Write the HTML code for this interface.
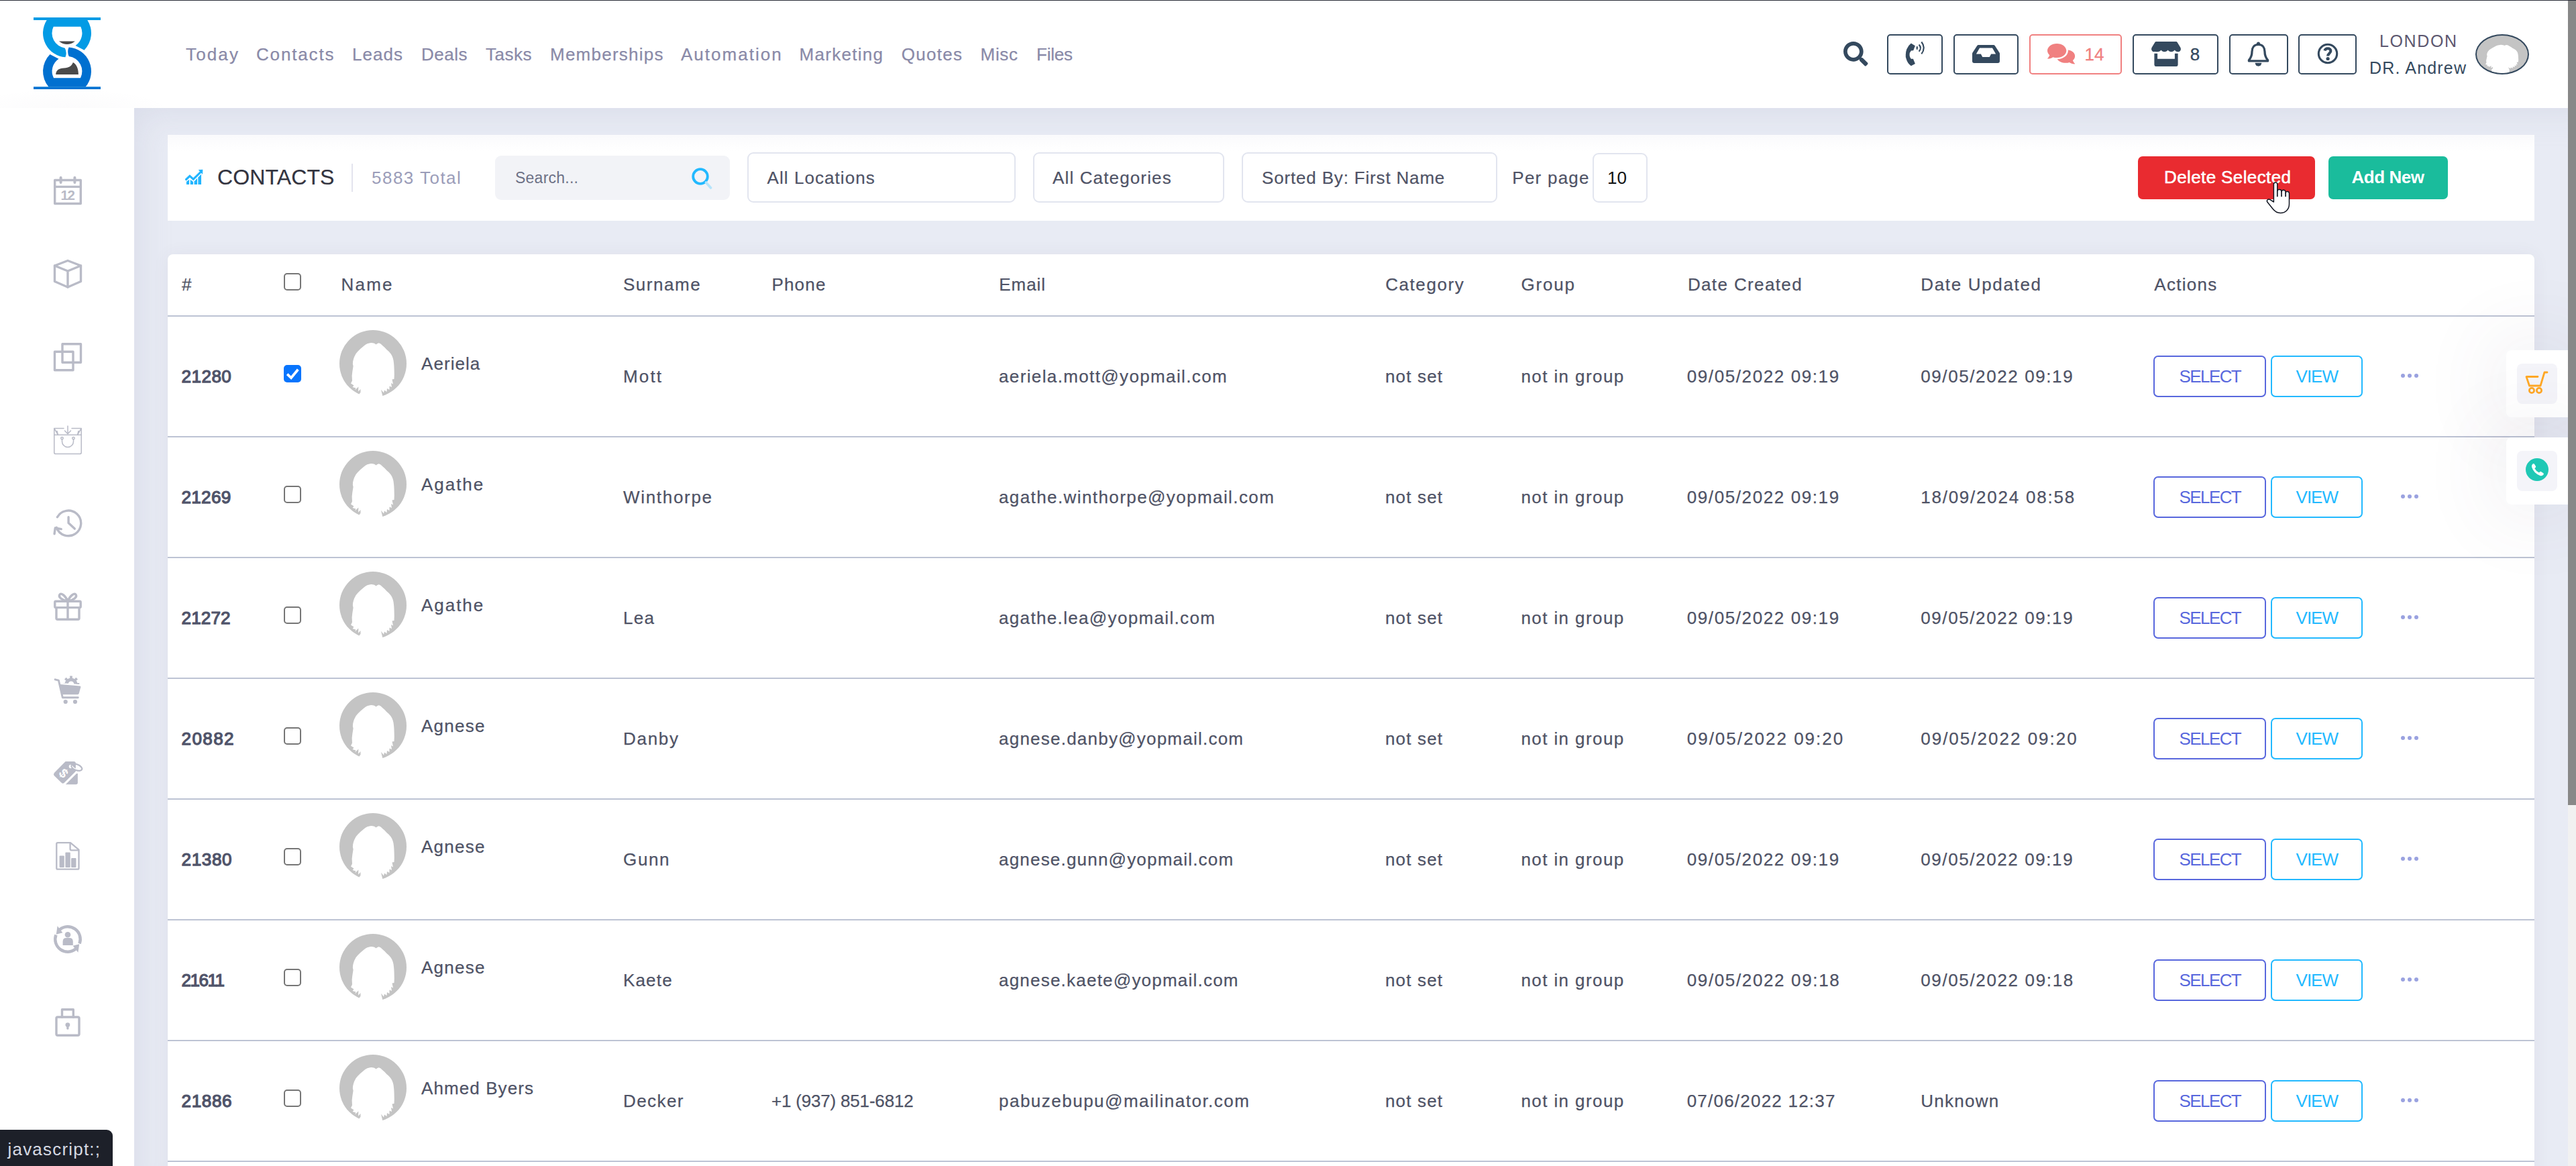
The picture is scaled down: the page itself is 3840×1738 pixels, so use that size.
<!DOCTYPE html>
<html lang="en"><head><meta charset="utf-8"><title>Contacts</title>
<style>

*{box-sizing:border-box;margin:0;padding:0}
html,body{width:3840px;height:1738px;overflow:hidden;background:#fff}
body{position:relative;font-family:"Liberation Sans",Arial,sans-serif;font-size:25px;color:#4f5366}
svg{display:block}
.topline{position:absolute;left:0;top:0;width:3840px;height:1px;background:#2a2d38;z-index:50}
.hdr{position:absolute;left:0;top:0;width:3828px;height:161px;background:#fff;z-index:20}
.hdr-shadow{position:absolute;left:0;top:121px;width:320px;height:40px;background:radial-gradient(ellipse 160px 34px at 100px 44px,rgba(82,63,105,.022),rgba(82,63,105,0) 100%)}
.logo{position:absolute;left:50px;top:26px;width:100px;height:108px}
.side{position:absolute;left:0;top:161px;width:200px;height:1577px;background:#fff;z-index:10}
.sico{position:absolute;left:77px;width:48px;height:48px;color:#b9bbc7}
.sico svg{width:48px;height:48px}
.content{position:absolute;left:200px;top:161px;width:3628px;height:1577px;background:#e8ebf4;overflow:hidden}
.content-shade{position:absolute;left:0;top:0;right:0;bottom:0;box-shadow:inset 30px 30px 50px -24px rgba(170,176,200,.24)}
.toolbar{position:absolute;left:50px;top:40px;width:3528px;height:128px;background:linear-gradient(#fafafc,#fff 24px)}
.tcard{position:absolute;left:50px;top:218px;width:3528px;height:1400px;background:#fff;border-radius:8px 8px 0 0;box-shadow:0 0 26px 0 rgba(82,63,105,.06)}
.thead{position:absolute;left:0;top:0;width:100%;height:91px}
.row{position:absolute;left:0;width:100%;height:180px;border-top:2px solid #bdc3d4}
.t{position:absolute;white-space:nowrap;line-height:1;transform:translateY(-50%)}
.nav{font-size:26px;color:#8a8aa8;-webkit-text-stroke:.25px #8a8aa8}
.th{font-size:26px;color:#4f5366;-webkit-text-stroke:.25px #4f5366}
.td{font-size:26px;color:#4f5366;-webkit-text-stroke:.25px #4f5366}
.idc{font-size:26px;font-weight:400;color:#50546a;-webkit-text-stroke:1.25px #50546a}
.ttl{font-size:32px;color:#33343f;-webkit-text-stroke:.2px #33343f}
.desc{font-size:26px;color:#9b9db9}
.ph{font-size:23px;color:#6d7186}
.so{font-size:26px;color:#4f5366;-webkit-text-stroke:.2px #4f5366}
.pp{font-size:26px;color:#4f5366;-webkit-text-stroke:.2px #4f5366}
.ten{font-size:26px;color:#111}
.bw{font-size:26px;font-weight:400;color:#fff;-webkit-text-stroke:.55px #fff}
.bb{font-size:26px;font-weight:700;color:#fff}
.cnt{font-size:26px;-webkit-text-stroke:.3px currentColor}
.salmon{color:#f08080}
.navy{color:#34495e}
.loc{font-size:25px;color:#5d5870}
.usr{font-size:25px;color:#34495e}
.bsel{font-size:26px;color:#5867dd}
.bvw{font-size:26px;color:#22b9ff}
.hb{position:absolute;border:2px solid #34495e;border-radius:5px;color:#34495e}
.hb.sal{border-color:#f08080;color:#f08080}
.hb svg,.hs svg{position:absolute}
.hs{position:absolute;color:#34495e}
.uav{position:absolute;border:2px solid #34495e;border-radius:50%;overflow:hidden;background:#c4c4c4}
.chart{position:absolute;color:#22b5ff}
.vdiv{position:absolute;background:#e3e4ee}
.sbox{position:absolute;background:#f2f3f7;border-radius:9px}
.sbox svg{position:absolute;left:293px;top:18px}
.selbox{position:absolute;border:2px solid #e2e5ef;border-radius:9px;background:#fff}
.bdel{position:absolute;background:#e92b30;border-radius:7px}
.badd{position:absolute;background:#1abc9c;border-radius:7px}
.av{position:absolute;left:256px;top:20px;width:100px;height:100px}
.cb{position:absolute;left:173px;top:72px;width:26px;height:26px;border:2px solid #767676;border-radius:5px;background:#fff}
.thead .cb{top:28px}
.cb.on{background:#0875fd;border:0}
.cb svg{position:absolute;left:0;top:0}
.btn{position:absolute;border:2px solid #5867dd;border-radius:7px}
.btn.vw{border-color:#22b9ff}
.dots{position:absolute;left:3329px;top:85px;width:28px;height:8px}
.dots i{position:absolute;top:0;width:6.4px;height:6.4px;border-radius:50%;background:#9aa2e0}
.dots i:nth-child(1){left:0}.dots i:nth-child(2){left:10px}.dots i:nth-child(3){left:20px}
.fl{position:absolute;left:3736px;width:92px;height:100px;background:#fff;border-radius:8px 0 0 8px;z-index:30;box-shadow:0 0 110px 30px rgba(82,63,105,.06)}
.fli{position:absolute;left:16px;top:20px;width:60px;height:60px;border-radius:8px;background:#f4f4f9}
.fli svg{position:absolute;left:0;top:0}
.sbar{position:absolute;left:3828px;top:0;width:12px;height:1738px;background:#f1f1f1;z-index:40}
.thumb{position:absolute;left:0;top:0;width:12px;height:1200px;background:#888}
.status{position:absolute;left:0;top:1684px;height:54px;width:168px;background:#1d2029;border-top-right-radius:9px;z-index:60}
.stt{font-size:26px;color:#d6d9e2}
.cursor{position:absolute;left:3376px;top:268px;z-index:70}

</style></head>
<body>
<main class="content"><div class="content-shade"></div>
<section class="toolbar">
<div class="chart" style="left:26px;top:51px;width:27px;height:24px;"><svg width="27" height="24" viewBox="0 -1 27 24" ><path d="M1.500 14.500L6.900 9.400L12.200 14.100L23.500 3.200" fill="none" stroke="currentColor" stroke-width="3.100" stroke-linecap="round" stroke-linejoin="miter"/><g fill="currentColor"><path d="M19.700 .100L26.300 -.200L26 7Z"/><path d="M1.900 17.700L6 14.700V22H1.900Z"/><path d="M7.700 14.800L12 17.900V22H7.700Z"/><path d="M13.500 17.500L18 12.800V22H13.500Z"/><path d="M19.300 11.500L24 6.800V22H19.300Z"/></g></svg></div>
<div class="vdiv" style="left:274px;top:43px;width:2px;height:42px;"></div>
<div class="sbox" style="left:488px;top:31px;width:350px;height:66px;"><svg width="31" height="32" viewBox="0 0 31 32" ><circle cx="13" cy="13" r="10.800" fill="none" stroke="#22b9ff" stroke-width="3.800"/><path d="M21.500 22L28.500 30" stroke="#b5e4fb" stroke-width="3.600" stroke-linecap="round"/></svg><span id="ph" class="t ph" style="left:30px;top:33px;letter-spacing:0.24px;">Search...</span></div>
<div class="selbox" style="left:864px;top:26px;width:400px;height:75px;"><span id="so0" class="t so" style="left:27.5px;top:36px;letter-spacing:1.07px;">All Locations</span></div>
<div class="selbox" style="left:1290px;top:26px;width:285px;height:75px;"><span id="so1" class="t so" style="left:27px;top:36px;letter-spacing:1.14px;">All Categories</span></div>
<div class="selbox" style="left:1601px;top:26px;width:381px;height:75px;"><span id="so2" class="t so" style="left:28px;top:36px;letter-spacing:0.83px;">Sorted By: First Name</span></div>
<div class="selbox" style="left:2124px;top:27px;width:82px;height:74px;"><span id="ten" class="t ten" style="left:20px;top:35px;">10</span></div>
<a class="bdel" style="left:2937px;top:32px;width:264px;height:64px;"><span id="bdel" class="t bw" style="left:39px;top:31px;letter-spacing:0.39px;">Delete Selected</span></a>
<a class="badd" style="left:3221px;top:32px;width:178px;height:64px;"><span id="badd" class="t bb" style="left:34.5px;top:31px;letter-spacing:-0.44px;">Add New</span></a>
<span id="ttl" class="t ttl" style="left:74px;top:63px;letter-spacing:0.12px;">CONTACTS</span>
<span id="desc" class="t desc" style="left:304px;top:64px;letter-spacing:1.48px;">5883 Total</span>
<span id="pp" class="t pp" style="left:2004.3px;top:64px;letter-spacing:1.24px;">Per page</span>
</section>
<section class="tcard">
<div class="thead">
<div class="cb" style="left:173px;top:28px;"></div>
<span id="h0" class="t th" style="left:21px;top:45px;">#</span>
<span id="h1" class="t th" style="left:258.5px;top:45px;letter-spacing:2.21px;">Name</span>
<span id="h2" class="t th" style="left:679px;top:45px;letter-spacing:1.52px;">Surname</span>
<span id="h3" class="t th" style="left:900.4px;top:45px;letter-spacing:1.20px;">Phone</span>
<span id="h4" class="t th" style="left:1239.3px;top:45px;letter-spacing:0.92px;">Email</span>
<span id="h5" class="t th" style="left:1815.2px;top:45px;letter-spacing:1.57px;">Category</span>
<span id="h6" class="t th" style="left:2017.4px;top:45px;letter-spacing:1.83px;">Group</span>
<span id="h7" class="t th" style="left:2265.9px;top:45px;letter-spacing:1.37px;">Date Created</span>
<span id="h8" class="t th" style="left:2613.2px;top:45px;letter-spacing:1.67px;">Date Updated</span>
<span id="h9" class="t th" style="left:2961.3px;top:45px;letter-spacing:1.29px;">Actions</span>
</div>
<div class="row" style="top:91px">
<div class="av"><svg width="100" height="100" viewBox="0 0 100 100"><circle cx="50" cy="50" r="50" fill="#c4c4c4"/><path fill="#fff" d="M54.6 21.6L52 19.8Q48 18.6 45.6 19.3Q41 20 38.4 21.9L31.2 28.1Q27 32 24.5 35.3Q21.8 40 20.9 43.5Q19.8 47 19.9 50.7L20.6 53.8L19.3 62.1L18.6 68.2L19 75.4L17 79.5L21.5 82.5L19.5 85L24.5 86.5L23 89.5L28.4 84.5L28 91.5L31.5 88L31.5 93L34.3 89.3L29 96L31 112H63L64.3 98L62 88.8L66 93.5L67 89.5L70.5 92L71 87L74.5 89L74.5 83.5L78 85L77 79L80 80.5L78.5 73.5L81.5 73L81.8 66.2L81.6 57.9Q81.5 53 81.1 49.7Q80.8 45 79.6 41.5Q78.5 38 76.5 35.3Q73.500 31.500 70.300 29.100Q67 25 64.100 22.900Q61.500 20 58.800 19.300Q56.5 19.6 54.6 21.6Z"/></svg></div>
<span class="cb on"><svg width="26" height="26" viewBox="0 0 26 26" ><path d="M5.200 13.700L11 19.300L21.300 6.700" fill="none" stroke="#fff" stroke-width="3.800"/></svg></span>
<span class="dots"><i></i><i></i><i></i></span>
<a class="btn sel" style="left:2960px;top:58px;width:168px;height:62px;"><span id="r0bs" class="t bsel" style="left:36.6px;top:28.5px;letter-spacing:-1.61px;">SELECT</span></a>
<a class="btn vw" style="left:3135px;top:58px;width:137px;height:62px;"><span id="r0bv" class="t bvw" style="left:35.6px;top:28.5px;letter-spacing:-1.02px;">VIEW</span></a>
<span id="r0id" class="t idc" style="left:20.5px;top:89px;letter-spacing:0.50px;">21280</span>
<span id="r0nm" class="t td" style="left:378px;top:69.5px;letter-spacing:1.06px;">Aeriela</span>
<span id="r0sn" class="t td" style="left:679px;top:89px;letter-spacing:2.14px;">Mott</span>
<span id="r0em" class="t td" style="left:1239px;top:89px;letter-spacing:1.37px;">aeriela.mott@yopmail.com</span>
<span id="r0ct" class="t td" style="left:1815px;top:89px;letter-spacing:1.16px;">not set</span>
<span id="r0gr" class="t td" style="left:2017.4px;top:89px;letter-spacing:1.41px;">not in group</span>
<span id="r0dc" class="t td" style="left:2264.7px;top:89px;letter-spacing:1.60px;">09/05/2022 09:19</span>
<span id="r0du" class="t td" style="left:2613.2px;top:89px;letter-spacing:1.60px;">09/05/2022 09:19</span>
</div>
<div class="row" style="top:271px">
<div class="av"><svg width="100" height="100" viewBox="0 0 100 100"><circle cx="50" cy="50" r="50" fill="#c4c4c4"/><path fill="#fff" d="M54.6 21.6L52 19.8Q48 18.6 45.6 19.3Q41 20 38.4 21.9L31.2 28.1Q27 32 24.5 35.3Q21.8 40 20.9 43.5Q19.8 47 19.9 50.7L20.6 53.8L19.3 62.1L18.6 68.2L19 75.4L17 79.5L21.5 82.5L19.5 85L24.5 86.5L23 89.5L28.4 84.5L28 91.5L31.5 88L31.5 93L34.3 89.3L29 96L31 112H63L64.3 98L62 88.8L66 93.5L67 89.5L70.5 92L71 87L74.5 89L74.5 83.5L78 85L77 79L80 80.5L78.5 73.5L81.5 73L81.8 66.2L81.6 57.9Q81.5 53 81.1 49.7Q80.8 45 79.6 41.5Q78.5 38 76.5 35.3Q73.500 31.500 70.300 29.100Q67 25 64.100 22.900Q61.500 20 58.800 19.300Q56.5 19.6 54.6 21.6Z"/></svg></div>
<span class="cb"></span>
<span class="dots"><i></i><i></i><i></i></span>
<a class="btn sel" style="left:2960px;top:58px;width:168px;height:62px;"><span id="r1bs" class="t bsel" style="left:36.6px;top:28.5px;letter-spacing:-1.61px;">SELECT</span></a>
<a class="btn vw" style="left:3135px;top:58px;width:137px;height:62px;"><span id="r1bv" class="t bvw" style="left:35.6px;top:28.5px;letter-spacing:-1.02px;">VIEW</span></a>
<span id="r1id" class="t idc" style="left:20.5px;top:89px;letter-spacing:0.35px;">21269</span>
<span id="r1nm" class="t td" style="left:378px;top:69.5px;letter-spacing:1.96px;">Agathe</span>
<span id="r1sn" class="t td" style="left:679px;top:89px;letter-spacing:1.69px;">Winthorpe</span>
<span id="r1em" class="t td" style="left:1239px;top:89px;letter-spacing:1.41px;">agathe.winthorpe@yopmail.com</span>
<span id="r1ct" class="t td" style="left:1815px;top:89px;letter-spacing:1.16px;">not set</span>
<span id="r1gr" class="t td" style="left:2017.4px;top:89px;letter-spacing:1.41px;">not in group</span>
<span id="r1dc" class="t td" style="left:2264.7px;top:89px;letter-spacing:1.60px;">09/05/2022 09:19</span>
<span id="r1du" class="t td" style="left:2613.2px;top:89px;letter-spacing:1.77px;">18/09/2024 08:58</span>
</div>
<div class="row" style="top:451px">
<div class="av"><svg width="100" height="100" viewBox="0 0 100 100"><circle cx="50" cy="50" r="50" fill="#c4c4c4"/><path fill="#fff" d="M54.6 21.6L52 19.8Q48 18.6 45.6 19.3Q41 20 38.4 21.9L31.2 28.1Q27 32 24.5 35.3Q21.8 40 20.9 43.5Q19.8 47 19.9 50.7L20.6 53.8L19.3 62.1L18.6 68.2L19 75.4L17 79.5L21.5 82.5L19.5 85L24.5 86.5L23 89.5L28.4 84.5L28 91.5L31.5 88L31.5 93L34.3 89.3L29 96L31 112H63L64.3 98L62 88.8L66 93.5L67 89.5L70.5 92L71 87L74.5 89L74.5 83.5L78 85L77 79L80 80.5L78.5 73.5L81.5 73L81.8 66.2L81.6 57.9Q81.5 53 81.1 49.7Q80.8 45 79.6 41.5Q78.5 38 76.5 35.3Q73.500 31.500 70.300 29.100Q67 25 64.100 22.900Q61.500 20 58.800 19.300Q56.5 19.6 54.6 21.6Z"/></svg></div>
<span class="cb"></span>
<span class="dots"><i></i><i></i><i></i></span>
<a class="btn sel" style="left:2960px;top:58px;width:168px;height:62px;"><span id="r2bs" class="t bsel" style="left:36.6px;top:28.5px;letter-spacing:-1.61px;">SELECT</span></a>
<a class="btn vw" style="left:3135px;top:58px;width:137px;height:62px;"><span id="r2bv" class="t bvw" style="left:35.6px;top:28.5px;letter-spacing:-1.02px;">VIEW</span></a>
<span id="r2id" class="t idc" style="left:20.5px;top:89px;letter-spacing:0.17px;">21272</span>
<span id="r2nm" class="t td" style="left:378px;top:69.5px;letter-spacing:1.96px;">Agathe</span>
<span id="r2sn" class="t td" style="left:679px;top:89px;letter-spacing:1.30px;">Lea</span>
<span id="r2em" class="t td" style="left:1239px;top:89px;letter-spacing:1.34px;">agathe.lea@yopmail.com</span>
<span id="r2ct" class="t td" style="left:1815px;top:89px;letter-spacing:1.16px;">not set</span>
<span id="r2gr" class="t td" style="left:2017.4px;top:89px;letter-spacing:1.41px;">not in group</span>
<span id="r2dc" class="t td" style="left:2264.7px;top:89px;letter-spacing:1.60px;">09/05/2022 09:19</span>
<span id="r2du" class="t td" style="left:2613.2px;top:89px;letter-spacing:1.60px;">09/05/2022 09:19</span>
</div>
<div class="row" style="top:631px">
<div class="av"><svg width="100" height="100" viewBox="0 0 100 100"><circle cx="50" cy="50" r="50" fill="#c4c4c4"/><path fill="#fff" d="M54.6 21.6L52 19.8Q48 18.6 45.6 19.3Q41 20 38.4 21.9L31.2 28.1Q27 32 24.5 35.3Q21.8 40 20.9 43.5Q19.8 47 19.9 50.7L20.6 53.8L19.3 62.1L18.6 68.2L19 75.4L17 79.5L21.5 82.5L19.5 85L24.5 86.5L23 89.5L28.4 84.5L28 91.5L31.5 88L31.5 93L34.3 89.3L29 96L31 112H63L64.3 98L62 88.8L66 93.5L67 89.5L70.5 92L71 87L74.5 89L74.5 83.5L78 85L77 79L80 80.5L78.5 73.5L81.5 73L81.8 66.2L81.6 57.9Q81.5 53 81.1 49.7Q80.8 45 79.6 41.5Q78.5 38 76.5 35.3Q73.500 31.500 70.300 29.100Q67 25 64.100 22.900Q61.500 20 58.800 19.300Q56.5 19.6 54.6 21.6Z"/></svg></div>
<span class="cb"></span>
<span class="dots"><i></i><i></i><i></i></span>
<a class="btn sel" style="left:2960px;top:58px;width:168px;height:62px;"><span id="r3bs" class="t bsel" style="left:36.6px;top:28.5px;letter-spacing:-1.61px;">SELECT</span></a>
<a class="btn vw" style="left:3135px;top:58px;width:137px;height:62px;"><span id="r3bv" class="t bvw" style="left:35.6px;top:28.5px;letter-spacing:-1.02px;">VIEW</span></a>
<span id="r3id" class="t idc" style="left:20.5px;top:89px;letter-spacing:1.42px;">20882</span>
<span id="r3nm" class="t td" style="left:378px;top:69.5px;letter-spacing:1.26px;">Agnese</span>
<span id="r3sn" class="t td" style="left:679px;top:89px;letter-spacing:1.71px;">Danby</span>
<span id="r3em" class="t td" style="left:1239px;top:89px;letter-spacing:1.23px;">agnese.danby@yopmail.com</span>
<span id="r3ct" class="t td" style="left:1815px;top:89px;letter-spacing:1.16px;">not set</span>
<span id="r3gr" class="t td" style="left:2017.4px;top:89px;letter-spacing:1.41px;">not in group</span>
<span id="r3dc" class="t td" style="left:2264.7px;top:89px;letter-spacing:2.01px;">09/05/2022 09:20</span>
<span id="r3du" class="t td" style="left:2613.2px;top:89px;letter-spacing:2.01px;">09/05/2022 09:20</span>
</div>
<div class="row" style="top:811px">
<div class="av"><svg width="100" height="100" viewBox="0 0 100 100"><circle cx="50" cy="50" r="50" fill="#c4c4c4"/><path fill="#fff" d="M54.6 21.6L52 19.8Q48 18.6 45.6 19.3Q41 20 38.4 21.9L31.2 28.1Q27 32 24.5 35.3Q21.8 40 20.9 43.5Q19.8 47 19.9 50.7L20.6 53.8L19.3 62.1L18.6 68.2L19 75.4L17 79.5L21.5 82.5L19.5 85L24.5 86.5L23 89.5L28.4 84.5L28 91.5L31.5 88L31.5 93L34.3 89.3L29 96L31 112H63L64.3 98L62 88.8L66 93.5L67 89.5L70.5 92L71 87L74.5 89L74.5 83.5L78 85L77 79L80 80.5L78.5 73.5L81.5 73L81.8 66.2L81.6 57.9Q81.5 53 81.1 49.7Q80.8 45 79.6 41.5Q78.5 38 76.5 35.3Q73.500 31.500 70.300 29.100Q67 25 64.100 22.900Q61.500 20 58.800 19.300Q56.5 19.6 54.6 21.6Z"/></svg></div>
<span class="cb"></span>
<span class="dots"><i></i><i></i><i></i></span>
<a class="btn sel" style="left:2960px;top:58px;width:168px;height:62px;"><span id="r4bs" class="t bsel" style="left:36.6px;top:28.5px;letter-spacing:-1.61px;">SELECT</span></a>
<a class="btn vw" style="left:3135px;top:58px;width:137px;height:62px;"><span id="r4bv" class="t bvw" style="left:35.6px;top:28.5px;letter-spacing:-1.02px;">VIEW</span></a>
<span id="r4id" class="t idc" style="left:20.5px;top:89px;letter-spacing:0.67px;">21380</span>
<span id="r4nm" class="t td" style="left:378px;top:69.5px;letter-spacing:1.26px;">Agnese</span>
<span id="r4sn" class="t td" style="left:679px;top:89px;letter-spacing:1.66px;">Gunn</span>
<span id="r4em" class="t td" style="left:1239px;top:89px;letter-spacing:1.20px;">agnese.gunn@yopmail.com</span>
<span id="r4ct" class="t td" style="left:1815px;top:89px;letter-spacing:1.16px;">not set</span>
<span id="r4gr" class="t td" style="left:2017.4px;top:89px;letter-spacing:1.41px;">not in group</span>
<span id="r4dc" class="t td" style="left:2264.7px;top:89px;letter-spacing:1.60px;">09/05/2022 09:19</span>
<span id="r4du" class="t td" style="left:2613.2px;top:89px;letter-spacing:1.60px;">09/05/2022 09:19</span>
</div>
<div class="row" style="top:991px">
<div class="av"><svg width="100" height="100" viewBox="0 0 100 100"><circle cx="50" cy="50" r="50" fill="#c4c4c4"/><path fill="#fff" d="M54.6 21.6L52 19.8Q48 18.6 45.6 19.3Q41 20 38.4 21.9L31.2 28.1Q27 32 24.5 35.3Q21.8 40 20.9 43.5Q19.8 47 19.9 50.7L20.6 53.8L19.3 62.1L18.6 68.2L19 75.4L17 79.5L21.5 82.5L19.5 85L24.5 86.5L23 89.5L28.4 84.5L28 91.5L31.5 88L31.5 93L34.3 89.3L29 96L31 112H63L64.3 98L62 88.8L66 93.5L67 89.5L70.5 92L71 87L74.5 89L74.5 83.5L78 85L77 79L80 80.5L78.5 73.5L81.5 73L81.8 66.2L81.6 57.9Q81.5 53 81.1 49.7Q80.8 45 79.6 41.5Q78.5 38 76.5 35.3Q73.500 31.500 70.300 29.100Q67 25 64.100 22.900Q61.500 20 58.800 19.300Q56.5 19.6 54.6 21.6Z"/></svg></div>
<span class="cb"></span>
<span class="dots"><i></i><i></i><i></i></span>
<a class="btn sel" style="left:2960px;top:58px;width:168px;height:62px;"><span id="r5bs" class="t bsel" style="left:36.6px;top:28.5px;letter-spacing:-1.61px;">SELECT</span></a>
<a class="btn vw" style="left:3135px;top:58px;width:137px;height:62px;"><span id="r5bv" class="t bvw" style="left:35.6px;top:28.5px;letter-spacing:-1.02px;">VIEW</span></a>
<span id="r5id" class="t idc" style="left:20.5px;top:89px;letter-spacing:-1.47px;">21611</span>
<span id="r5nm" class="t td" style="left:378px;top:69.5px;letter-spacing:1.26px;">Agnese</span>
<span id="r5sn" class="t td" style="left:679px;top:89px;letter-spacing:1.16px;">Kaete</span>
<span id="r5em" class="t td" style="left:1239px;top:89px;letter-spacing:1.22px;">agnese.kaete@yopmail.com</span>
<span id="r5ct" class="t td" style="left:1815px;top:89px;letter-spacing:1.16px;">not set</span>
<span id="r5gr" class="t td" style="left:2017.4px;top:89px;letter-spacing:1.41px;">not in group</span>
<span id="r5dc" class="t td" style="left:2264.7px;top:89px;letter-spacing:1.64px;">09/05/2022 09:18</span>
<span id="r5du" class="t td" style="left:2613.2px;top:89px;letter-spacing:1.64px;">09/05/2022 09:18</span>
</div>
<div class="row" style="top:1171px">
<div class="av"><svg width="100" height="100" viewBox="0 0 100 100"><circle cx="50" cy="50" r="50" fill="#c4c4c4"/><path fill="#fff" d="M54.6 21.6L52 19.8Q48 18.6 45.6 19.3Q41 20 38.4 21.9L31.2 28.1Q27 32 24.5 35.3Q21.8 40 20.9 43.5Q19.8 47 19.9 50.7L20.6 53.8L19.3 62.1L18.6 68.2L19 75.4L17 79.5L21.5 82.5L19.5 85L24.5 86.5L23 89.5L28.4 84.5L28 91.5L31.5 88L31.5 93L34.3 89.3L29 96L31 112H63L64.3 98L62 88.8L66 93.5L67 89.5L70.5 92L71 87L74.5 89L74.5 83.5L78 85L77 79L80 80.5L78.5 73.5L81.5 73L81.8 66.2L81.6 57.9Q81.5 53 81.1 49.7Q80.8 45 79.6 41.5Q78.5 38 76.5 35.3Q73.500 31.500 70.300 29.100Q67 25 64.100 22.900Q61.500 20 58.800 19.300Q56.5 19.6 54.6 21.6Z"/></svg></div>
<span class="cb"></span>
<span class="dots"><i></i><i></i><i></i></span>
<a class="btn sel" style="left:2960px;top:58px;width:168px;height:62px;"><span id="r6bs" class="t bsel" style="left:36.6px;top:28.5px;letter-spacing:-1.61px;">SELECT</span></a>
<a class="btn vw" style="left:3135px;top:58px;width:137px;height:62px;"><span id="r6bv" class="t bvw" style="left:35.6px;top:28.5px;letter-spacing:-1.02px;">VIEW</span></a>
<span id="r6id" class="t idc" style="left:20.5px;top:89px;letter-spacing:0.67px;">21886</span>
<span id="r6nm" class="t td" style="left:378px;top:69.5px;letter-spacing:1.09px;">Ahmed Byers</span>
<span id="r6sn" class="t td" style="left:679px;top:89px;letter-spacing:1.43px;">Decker</span>
<span id="r6ph" class="t td" style="left:900px;top:89px;letter-spacing:-0.19px;">+1 (937) 851-6812</span>
<span id="r6em" class="t td" style="left:1239px;top:89px;letter-spacing:1.49px;">pabuzebupu@mailinator.com</span>
<span id="r6ct" class="t td" style="left:1815px;top:89px;letter-spacing:1.16px;">not set</span>
<span id="r6gr" class="t td" style="left:2017.4px;top:89px;letter-spacing:1.41px;">not in group</span>
<span id="r6dc" class="t td" style="left:2264.7px;top:89px;letter-spacing:1.22px;">07/06/2022 12:37</span>
<span id="r6du" class="t td" style="left:2613.2px;top:89px;letter-spacing:1.27px;">Unknown</span>
</div>
<div class="row" style="top:1351px">

</div>
</section>
</main>
<aside class="side">
<a class="sico" style="top:99px"><svg width="48" height="48" viewBox="0 0 48 48" ><g fill="none" stroke="currentColor" stroke-width="3.4" stroke-linejoin="round" stroke-linecap="round"><rect x="4.700" y="8.500" width="38.600" height="35"/><path d="M4.700 18.400H43.300"/><path stroke-width="4" d="M13.600 4.800V12M34.400 4.800V12"/></g><text x="23.600" y="38.200" text-anchor="middle" font-family="Liberation Sans,Arial,sans-serif" font-weight="700" font-size="20.500" letter-spacing="-1.300" fill="currentColor">12</text></svg></a>
<a class="sico" style="top:223px"><svg width="48" height="48" viewBox="0 0 48 48" ><g fill="none" stroke="currentColor" stroke-width="3.4" stroke-linejoin="round" stroke-linecap="round"><path d="M24 4.5L43.5 12V35.5L24 44L4.5 35.5V12Z"/><path d="M4.5 12L24 20L43.5 12M24 20V44"/></g></svg></a>
<a class="sico" style="top:347px"><svg width="48" height="48" viewBox="0 0 48 48" ><g fill="none" stroke="currentColor" stroke-width="3.4" stroke-linejoin="round" stroke-linecap="round"><rect x="16" y="4.7" width="27.5" height="27.5"/><rect x="4.5" y="16.3" width="27.5" height="27.5"/></g></svg></a>
<a class="sico" style="top:471px"><svg width="48" height="48" viewBox="0 0 48 48" ><g fill="none" stroke="currentColor" stroke-width="1.500" stroke-linejoin="round" stroke-linecap="round"><path d="M3.800 16.200V42.500Q3.800 44.600 6 44.600H42Q44.200 44.600 44.200 42.500V16.200"/><path d="M3.800 16.200H44.200M3.800 6.500H18M30 6.500H44.200M3.800 6.500V16.200M44.200 6.500V16.200M3.800 6.500L9.500 16.200M44.200 6.500L38.500 16.200M9.500 16.200L8 10.500M38.500 16.200L40 10.500"/><path d="M24 3V14.500M19.500 10L24 14.700L28.500 10"/><path d="M15.500 22.500V26A8.500 8.500 0 0 0 32.500 26V22.500"/><circle cx="15.500" cy="21.300" r="1.700"/><circle cx="32.500" cy="21.300" r="1.700"/></g></svg></a>
<a class="sico" style="top:595px"><svg width="48" height="48" viewBox="0 0 48 48" ><g fill="none" stroke="currentColor" stroke-width="3.4" stroke-linejoin="round" stroke-linecap="round"><path d="M8.46 14.79 A18.8 18.8 0 1 1 7.23 30.33"/><path d="M25.100 14.700V23.600L34.300 32.100"/><path d="M4.100 39.800L5.300 31L14.300 32.600"/></g></svg></a>
<a class="sico" style="top:719px"><svg width="48" height="48" viewBox="0 0 48 48" ><g fill="none" stroke="currentColor" stroke-width="3.4" stroke-linejoin="round" stroke-linecap="round"><rect x="4.800" y="16.300" width="38.400" height="9.300" rx="1.500"/><path d="M7 25.600V41.500Q7 43.200 8.800 43.200H39.200Q41 43.200 41 41.500V25.600"/><path d="M24 16.300V43.200"/><path d="M24 16C20 7 14 3.5 11.8 6.5C9.8 10 15 14.5 24 16C33 14.5 38.2 10 36.2 6.5C34 3.5 28 7 24 16Z"/></g></svg></a>
<a class="sico" style="top:843px"><svg width="48" height="48" viewBox="0 0 48 48" ><defs><clipPath id="cgc"><path d="M0 0H48V16.6L11 13.7V0Z"/></clipPath></defs><g clip-path="url(#cgc)"><circle cx="29" cy="15.800" r="6.900" fill="none" stroke="currentColor" stroke-width="5"/><path fill="currentColor" d="M27.21 7.39 L27.14 3.54 L30.86 3.54 L30.79 7.39 Z M33.68 8.59 L36.35 5.81 L38.99 8.45 L36.21 11.12 Z M37.41 14.01 L41.26 13.94 L41.26 17.66 L37.41 17.59 Z M36.21 20.48 L38.99 23.15 L36.35 25.79 L33.68 23.01 Z M30.79 24.21 L30.86 28.06 L27.14 28.06 L27.21 24.21 Z M24.32 23.01 L21.65 25.79 L19.01 23.15 L21.79 20.48 Z M20.59 17.59 L16.74 17.66 L16.74 13.94 L20.59 14.01 Z M21.79 11.12 L19.01 8.45 L21.65 5.81 L24.32 8.59 Z "/></g><g fill="currentColor"><path d="M12.3 15.9L42 18.4Q43.7 18.6 43.3 20.2L40.7 29.8Q40.3 31.2 38.7 31.2H16Z"/><circle cx="20.7" cy="42" r="3.1"/><circle cx="35" cy="42" r="3.1"/></g><path d="M5.2 8.8L10.4 10.2L16.3 35.7H39.3" fill="none" stroke="currentColor" stroke-width="2.9" stroke-linecap="round" stroke-linejoin="round"/></svg></a>
<a class="sico" style="top:967px"><svg width="48" height="48" viewBox="0 0 48 48" ><g fill="currentColor"><path fill-rule="evenodd" d="M20.600 7H33Q35.900 7 35.900 9.800V21.700L18.800 38.800Q17 40.300 15.200 39.200L3.600 28Q2.300 25.800 4.100 23.800ZM28.400 11.800A2.700 2.700 0 1 0 28.400 17.200A2.700 2.700 0 0 0 28.400 11.800Z"/><path d="M20.900 41.300L37.100 25H38.900V38.500Q38.900 41.300 36.200 41.300Z"/></g><g fill="none" transform="rotate(22 37.400 15.800)"><ellipse cx="37.400" cy="15.800" rx="8.400" ry="4.300" stroke="currentColor" stroke-width="2.200"/><path d="M30.800 16.250A6.700 2.600 0 0 0 38.560 18.360" stroke="#fff" stroke-width="1.300"/></g><text x="17.900" y="31.300" transform="rotate(45 17.900 24.700)" text-anchor="middle" font-family="Liberation Sans,Arial,sans-serif" font-weight="700" font-size="19" fill="#fff">$</text></svg></a>
<a class="sico" style="top:1091px"><svg width="48" height="48" viewBox="0 0 48 48" ><g fill="none" stroke="currentColor" stroke-width="2.300" stroke-linejoin="round"><path d="M9 4.100H28L40.500 14.600V42Q40.500 43.700 38.800 43.700H9Q7.300 43.700 7.300 42V5.800Q7.300 4.100 9 4.100Z"/><path d="M27.600 4.500V13.600Q27.600 15.400 29.400 15.400H40.200"/></g><g fill="currentColor"><rect x="11.600" y="23.400" width="7.200" height="17.500" rx="1"/><rect x="20.400" y="18.600" width="7.400" height="22.300" rx="1"/><rect x="29.100" y="27" width="7.400" height="13.900" rx="1"/></g></svg></a>
<a class="sico" style="top:1215px"><svg width="48" height="48" viewBox="0 0 48 48" ><g fill="none" stroke="currentColor" stroke-width="4.5"><path d="M11.98 9.67 A18.7 18.7 0 0 1 41.57 30.40"/><path d="M36.02 38.33 A18.7 18.7 0 0 1 6.43 17.60"/></g><g fill="currentColor"><path d="M16.37 14.23 L8.61 4.30 L6.79 16.69 Z"/><path d="M31.63 33.77 L39.39 43.70 L41.21 31.31 Z"/><circle cx="24" cy="17.2" r="4.3"/><path d="M16.6 33V27.400Q16.600 22 22 22H26.400Q31.800 22 31.800 27.400V33Z"/></g></svg></a>
<a class="sico" style="top:1339px"><svg width="48" height="48" viewBox="0 0 48 48" ><g fill="none" stroke="currentColor" stroke-width="3.4" stroke-linejoin="round" stroke-linecap="round"><rect x="7" y="16" width="34" height="27.300" rx="2"/><path d="M15.500 16V4.700H32.300V16"/></g><g fill="currentColor"><circle cx="23.900" cy="27.600" r="3.400"/><rect x="22.300" y="28" width="3.200" height="6.400" rx=".8"/></g></svg></a>
</aside>
<header class="hdr">
<div class="hdr-shadow"></div>
<a class="logo"><svg width="100" height="107" viewBox="0 0 100 107"><rect x="0" y="0" width="100" height="4" fill="#039be5"/><rect x="0" y="103.3" width="100" height="3.7" fill="#0273d2"/><path fill="#039be5" d="M19.7 4A36 36 0 0 0 47.4 59.3Q50.3 52.5 46.8 45.7A22.5 22.5 0 0 1 29.7 13.7H70.3A22.5 22.5 0 0 1 62.5 41.9L75.6 48.7A36 36 0 0 0 80.3 4Z"/><path fill="#0070d0" d="M77.5 103.5A36 36 0 0 0 52.6 44.4Q49.6 51.2 52.8 58A22.4 22.4 0 0 1 70 90.3H30A22.4 22.4 0 0 1 37.5 61.7L24.5 54.9A36 36 0 0 0 22.5 103.5Z"/><path fill="#4a4a4a" d="M37.9 35.5H61.9Q50 44.7 37.9 35.5Z"/><path fill="#4a4a4a" d="M33.2 85C33.5 80 36 77 42.4 75.8C50 74.8 56 74.5 58.9 66.9C63 69 67 75 66.9 85Z"/></svg></a>
<div class="hs" style="left:2748px;top:62px;width:37px;height:37px;"><svg width="36.5" height="36.5" viewBox="0 0 512 512" ><path fill="currentColor" d="M505 442.7L405.3 343c-4.500-4.500-10.600-7-17-7H372c27.600-35.300 44-79.700 44-128C416 93.100 322.900 0 208 0S0 93.100 0 208s93.100 208 208 208c48.300 0 92.700-16.400 128-44v16.300c0 6.400 2.500 12.500 7 17l99.700 99.700c9.400 9.400 24.600 9.400 33.900 0l28.300-28.300c9.400-9.400 9.400-24.600.100-34zM208 336c-70.700 0-128-57.200-128-128 0-70.700 57.200-128 128-128 70.700 0 128 57.200 128 128 0 70.700-57.200 128-128 128z"/></svg></div>
<div class="hb" style="left:2813px;top:51px;width:83px;height:60px;"><svg width="79" height="56" viewBox="2 2 79 56" style="left:0;top:0"><path fill="currentColor" d="M35.800 13.600L41.900 17.200L39.200 24.200L35.900 24.600Q33.200 27.500 33.500 31.300Q33.600 34.500 35.800 36.800L38.900 36.800L41.900 43.900L35.800 47.200Q30.500 43.500 28.800 37.300Q27.300 33.500 27.800 30.300Q27.800 26 29.300 22.200Q31.500 17 35.800 13.600Z"/><g fill="none" stroke="currentColor" stroke-linecap="butt"><path stroke-width="2.300" d="M44.400 18.300Q45.500 20.500 44.400 22.700"/><path stroke-width="2.100" d="M47.600 15.500Q52.200 20.500 47.600 25.700"/><path stroke-width="2.100" d="M51.300 11.500Q58.300 20.300 51.300 29.300"/></g></svg></div>
<div class="hb" style="left:2912px;top:51px;width:97px;height:60px;"><svg width="41" height="27" viewBox="0 0 42 28" preserveAspectRatio="none" style="left:26px;top:14px"><path fill="currentColor" fill-rule="evenodd" d="M9.5 0H32.5Q33.8 0 34.5 1.100L41.500 11.800Q42 12.600 42 13.600V25Q42 28 39 28H3Q0 28 0 25V13.600Q0 12.600.500 11.800L7.500 1.100Q8.200 0 9.500 0ZM11.300 4.600L6 14H13.200L15.600 18.600H26.400L28.800 14H36L30.700 4.600Z"/></svg></div>
<a class="hb sal" style="left:3025px;top:51px;width:138px;height:60px;"><svg width="41.5" height="32" viewBox="0 0 44 34" preserveAspectRatio="none" style="left:25px;top:12px"><g fill="currentColor"><path d="M15 0C23.300 0 30 5 30 11.200S23.300 22.400 15 22.400C12.800 22.400 10.700 22 8.800 21.400C6.800 22.800 3.800 24 .500 24C.200 24 0 23.700.200 23.400C1 22.600 2.800 20.400 3.500 18.200C1.300 16.300 0 13.900 0 11.200C0 5 6.700 0 15 0Z"/><path d="M32.800 10.200C38.900 11 43.600 14.900 43.600 19.800C43.600 22.400 42.300 24.700 40.200 26.500C40.900 28.700 42.600 30.800 43.400 31.600C43.700 31.900 43.400 32.300 43.100 32.300C39.800 32.300 36.900 31.100 34.900 29.700C33 30.300 31 30.600 28.800 30.600C23 30.600 18 28.200 15.600 24.700C24.800 24.600 32.800 18.900 32.800 11.200Z"/></g></svg><span id="c14" class="t cnt salmon" style="left:80.5px;top:28px;">14</span></a>
<a class="hb" style="left:3179px;top:51px;width:128px;height:60px;"><svg width="44" height="37" viewBox="0 0 45 37" preserveAspectRatio="none" style="left:25.500px;top:9px"><g fill="currentColor"><path d="M7.200 0H37.800Q38.900 0 39.500 1L44.300 8.800C46 12 44 15 41 15.300C38.500 15.500 36.500 14.200 35.500 12.500C34.300 14.300 32.500 15.300 30.400 15.300C28.200 15.300 26.400 14.300 25.200 12.500C24 14.300 22.100 15.300 20 15.300C17.800 15.300 16 14.300 14.800 12.500C13.600 14.300 11.700 15.300 9.600 15.300C7.500 15.300 5 14.500 4 15.300C1 15 -1 12 .700 8.800L5.500 1Q6.100 0 7.200 0Z"/><path d="M4.500 17.800H9.300V25.800H35.700V17.800H40.500V34.500Q40.500 37 38 37H7Q4.500 37 4.500 34.500Z"/></g></svg><span id="c8" class="t cnt navy" style="left:83.8px;top:28px;">8</span></a>
<div class="hb" style="left:3323px;top:51px;width:88px;height:60px;"><svg width="33" height="36.700" viewBox="0 0 34 38" preserveAspectRatio="none" style="left:25px;top:9px"><g fill="none" stroke="currentColor" stroke-width="3.400" stroke-linejoin="round"><path d="M17 4.500C10.500 4.500 7.200 9.500 7.200 15.500C7.200 22 5.200 25.500 2.500 28.500V30H31.500V28.500C28.800 25.500 26.800 22 26.800 15.500C26.800 9.500 23.500 4.500 17 4.500Z"/></g><g fill="currentColor"><circle cx="17" cy="3" r="2.600"/><path d="M12 33H22A5 5 0 0 1 12 33Z"/></g></svg></div>
<div class="hb" style="left:3426px;top:51px;width:87px;height:60px;"><svg width="32" height="32" viewBox="0 0 32 32" style="left:26px;top:11.300px"><circle cx="16" cy="16" r="13.700" fill="none" stroke="currentColor" stroke-width="3.100"/><path fill="none" stroke="currentColor" stroke-width="4" d="M11.400 11.600C12 9.300 13.800 8.300 16 8.300C18.600 8.300 20.400 9.800 20.400 12C20.400 15.300 16.100 15.700 16.100 19.500"/><circle cx="16.100" cy="23.500" r="2.600" fill="currentColor"/></svg></div>
<div class="uav" style="left:3690px;top:51px;width:80px;height:60px;"><svg width="76" height="56" viewBox="0 -10 100 117.4" preserveAspectRatio="none"><path fill="#fff" d="M54.6 21.6L52 19.8Q48 18.6 45.6 19.3Q41 20 38.4 21.9L31.2 28.1Q27 32 24.5 35.3Q21.8 40 20.9 43.5Q19.8 47 19.9 50.7L20.6 53.8L19.3 62.1L18.6 68.2L19 75.4L17 79.5L21.5 82.5L19.5 85L24.5 86.5L23 89.5L28.4 84.5L28 91.5L31.5 88L31.5 93L34.3 89.3L29 96L31 112H63L64.3 98L62 88.8L66 93.5L67 89.5L70.5 92L71 87L74.5 89L74.5 83.5L78 85L77 79L80 80.5L78.5 73.5L81.5 73L81.8 66.2L81.6 57.9Q81.5 53 81.1 49.7Q80.8 45 79.6 41.5Q78.5 38 76.5 35.3Q73.500 31.500 70.300 29.100Q67 25 64.100 22.900Q61.500 20 58.800 19.300Q56.5 19.6 54.6 21.6Z"/></svg></div>
<nav><a id="n0" class="t nav" style="left:277px;top:81px;letter-spacing:2.15px;">Today</a><a id="n1" class="t nav" style="left:382px;top:81px;letter-spacing:1.84px;">Contacts</a><a id="n2" class="t nav" style="left:525px;top:81px;letter-spacing:1.04px;">Leads</a><a id="n3" class="t nav" style="left:628px;top:81px;letter-spacing:0.50px;">Deals</a><a id="n4" class="t nav" style="left:724px;top:81px;letter-spacing:0.51px;">Tasks</a><a id="n5" class="t nav" style="left:820px;top:81px;letter-spacing:1.24px;">Memberships</a><a id="n6" class="t nav" style="left:1015px;top:81px;letter-spacing:2.02px;">Automation</a><a id="n7" class="t nav" style="left:1191.5px;top:81px;letter-spacing:1.29px;">Marketing</a><a id="n8" class="t nav" style="left:1343.7px;top:81px;letter-spacing:1.29px;">Quotes</a><a id="n9" class="t nav" style="left:1461.6px;top:81px;letter-spacing:0.65px;">Misc</a><a id="n10" class="t nav" style="left:1545px;top:81px;letter-spacing:-0.23px;">Files</a></nav>
<span id="loc" class="t loc" style="left:3547px;top:61px;letter-spacing:1.61px;">LONDON</span>
<span id="usr" class="t usr" style="left:3532px;top:100.5px;letter-spacing:1.18px;">DR. Andrew</span>
</header>
<div class="topline"></div>
<div class="fl" style="top:522px"><div class="fli"><svg width="60" height="60" viewBox="0 0 60 60" ><g fill="none" stroke="#ffa826" stroke-width="2.800" stroke-linecap="round" stroke-linejoin="round"><path d="M45 13H41L35 33H18.500L14 19.500H31"/><circle cx="22" cy="40" r="3.600"/><circle cx="33" cy="40" r="3.600"/></g></svg></div></div>
<div class="fl" style="top:652px"><div class="fli"><svg width="60" height="60" viewBox="0 0 60 60" ><circle cx="30" cy="28" r="17" fill="#1fc8b5"/><path fill="#fff" d="M23.500 19.500Q25 18.300 26 19.800L28 23Q28.600 24.200 27.600 25L26.300 26Q28.500 30.500 33 32.600L34.200 31.300Q35 30.500 36.200 31.200L39.300 33.200Q40.500 34.200 39.500 35.500Q37.500 38 34.500 37Q25 33.500 22 24Q21.500 21.200 23.500 19.500Z"/></svg></div></div>
<div class="sbar"><div class="thumb"></div></div>
<div class="status"><span id="st" class="t stt" style="left:11.5px;top:28.8px;letter-spacing:1.20px;">javascript:;</span></div>
<div class="cursor"><svg width="40" height="52" viewBox="0 0 40 52" ><path fill="#fff" stroke="#141824" stroke-width="1.500" stroke-linejoin="round" d="M13.400 33V6.700Q13.400 4 16.100 4T18.800 6.700V16.500Q19 14.400 21.900 14.400T25 17V17.500Q25.300 15.200 28 15.200T31.100 18V19.500Q31.400 17.500 33.800 17.500T36.500 20.200V36C36.500 44 31 49.500 23.400 49.500C17.500 49.500 14.500 46.500 11.800 43L4 33.200Q2.600 31.200 4.200 29.800T8 29.600L13.400 33Z"/><path d="M18.800 16V25.200M25 17V25.200M31.100 19V25.200" stroke="#141824" stroke-width="1.700" fill="none"/></svg></div>
</body></html>
